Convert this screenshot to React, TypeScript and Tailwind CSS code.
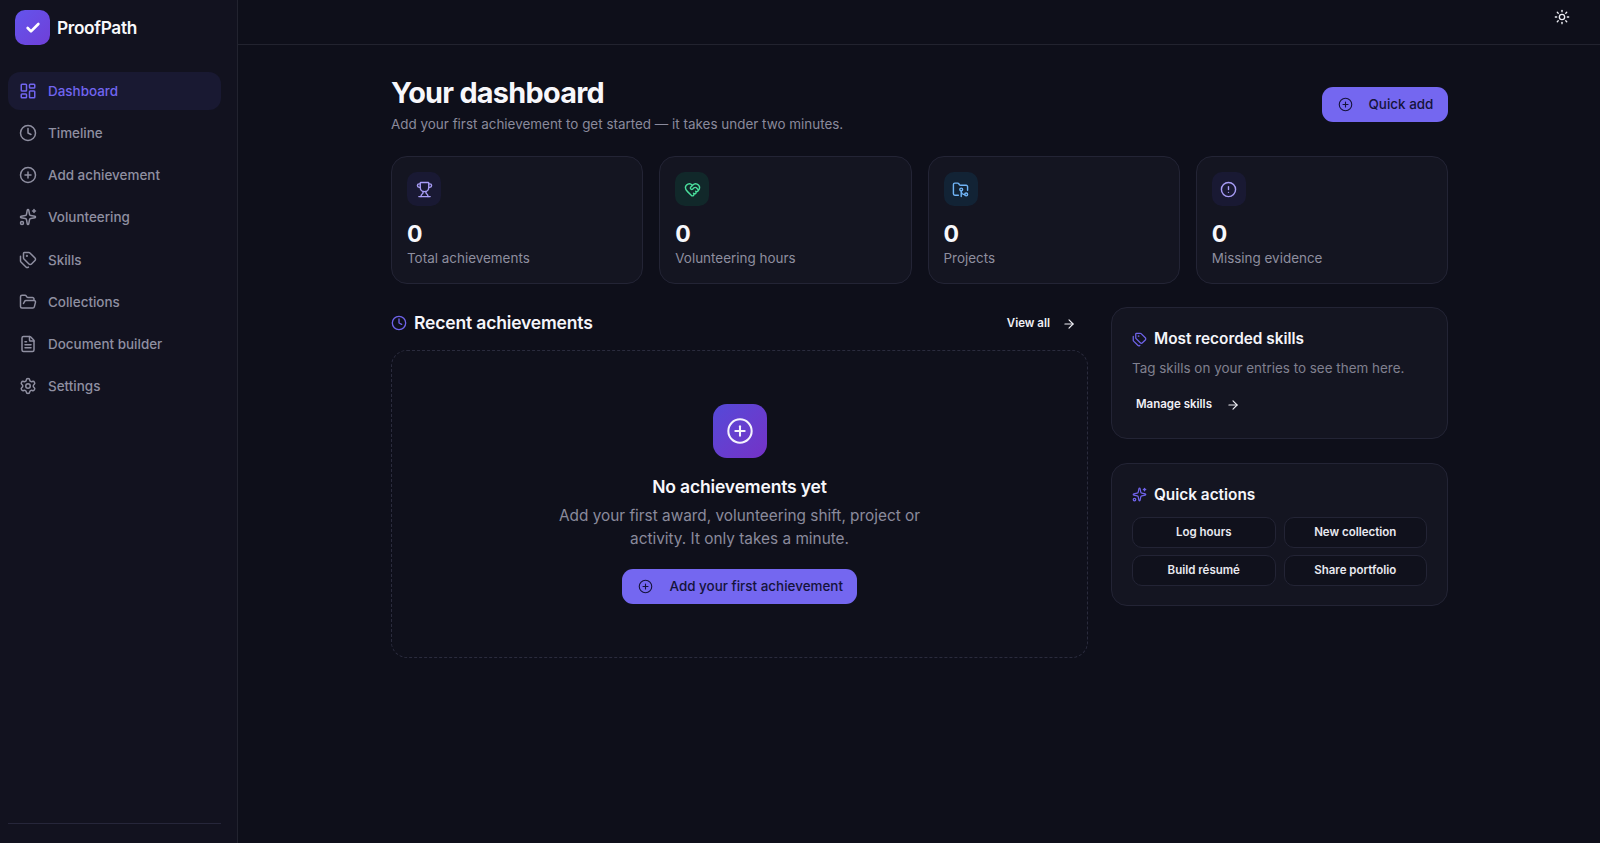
import React from "react";
import {
  LayoutDashboard, Clock, CirclePlus, Sparkles, Tags, FolderOpen, FileText, Settings,
  Trophy, HeartHandshake, FolderGit2, CircleAlert, Sun, ArrowRight, Check,
} from "lucide-react";

const nav = [
  { label: "Dashboard", Icon: LayoutDashboard, active: true },
  { label: "Timeline", Icon: Clock },
  { label: "Add achievement", Icon: CirclePlus },
  { label: "Volunteering", Icon: Sparkles },
  { label: "Skills", Icon: Tags },
  { label: "Collections", Icon: FolderOpen },
  { label: "Document builder", Icon: FileText },
  { label: "Settings", Icon: Settings },
];

function Stat({ Icon, label, box, color }: { Icon: any; label: string; box: string; color: string }) {
  return (
    <div className="h-[128px] rounded-2xl border border-[#232435] bg-[#141521] px-[15px] pt-[15px]">
      <div className={`flex h-[34px] w-[34px] items-center justify-center rounded-[10px] ${box}`}>
        <Icon size={17} strokeWidth={2} className={color} />
      </div>
      <div className="mt-[14px] text-[23px] leading-[28px] font-bold text-[#f7f7fb]">0</div>
      <div className="text-[13.44px] leading-[20px] text-[#8e8e9f]">{label}</div>
    </div>
  );
}

function Primary({ children, className }: { children: React.ReactNode; className: string }) {
  return (
    <button className={`flex h-[34.5px] items-center rounded-[11px] bg-[#7467f0] pl-[15.5px] text-[13.44px] font-medium text-[#15133a] ${className}`}>
      <CirclePlus size={15} strokeWidth={1.75} />
      {children}
    </button>
  );
}

export default function App() {
  return (
    <div className="flex h-screen overflow-hidden bg-[#0e0f1a] font-['Inter',sans-serif]">
      <aside className="flex h-full w-[238px] shrink-0 flex-col border-r border-r-[#22232f] bg-[#12121f]">
        <div className="flex h-[44px] items-center gap-[7px] pt-[11px] pl-[15px]">
          <div className="flex h-[35px] w-[35px] items-center justify-center rounded-[10px] bg-gradient-to-br from-[#6354ec] to-[#6f3fd8]">
            <Check size={16} strokeWidth={4} className="text-white" />
          </div>
          <span className="text-[17.3px] leading-none font-semibold tracking-[-0.02em] text-[#f8f8fc]">ProofPath</span>
        </div>
        <nav className="mt-[28px] flex flex-1 flex-col gap-1 pr-4 pl-2">
          {nav.map(({ label, Icon, active }) => (
            <div
              key={label}
              className={`flex h-[38.15px] items-center gap-[11px] rounded-xl pl-[11px] text-[13.44px] font-medium ${
                active ? "bg-[#191932] text-[#7165f0]" : "text-[#8f8fa1]"
              }`}
            >
              <Icon size={18} strokeWidth={2} />
              {label}
            </div>
          ))}
        </nav>
        <div className="mr-4 mb-[19px] ml-2 border-t border-t-[#26263a]" />
      </aside>

      <div className="flex min-w-0 flex-1 flex-col">
        <header className="flex h-[45px] shrink-0 items-center justify-end border-b border-b-[#22232f] pr-[30px] pb-[10px]">
          <Sun size={16} strokeWidth={2} className="text-[#eeeef4]" />
        </header>

        <main className="flex-1 pt-[30px] pr-[152px] pl-[153px]">
          <div className="flex items-start justify-between">
            <div>
              <h1 className="text-[28.8px] leading-9 font-bold tracking-[-0.025em] text-[#f7f7fb]">Your dashboard</h1>
              <p className="mt-[2.5px] text-[13.44px] leading-5 text-[#8a8a9c]">
                Add your first achievement to get started — it takes under two minutes.
              </p>
            </div>
            <Primary className="mt-[12px] w-[126px] gap-4">Quick add</Primary>
          </div>

          <div className="mt-[22.5px] grid grid-cols-4 gap-4">
            <Stat Icon={Trophy} label="Total achievements" box="bg-[#191933]" color="text-[#a79cf5]" />
            <Stat Icon={HeartHandshake} label="Volunteering hours" box="bg-[#11282a]" color="text-[#4ade9c]" />
            <Stat Icon={FolderGit2} label="Projects" box="bg-[#122335]" color="text-[#70b4f5]" />
            <Stat Icon={CircleAlert} label="Missing evidence" box="bg-[#191933]" color="text-[#a79cf5]" />
          </div>

          <div className="mt-[23px] grid grid-cols-[1fr_337px] gap-[23px]">
            <section>
              <div className="flex h-[32px] items-center justify-between pr-[12px]">
                <div className="flex items-center gap-[7px]">
                  <Clock size={16} strokeWidth={2} className="text-[#6f63ea]" />
                  <h2 className="text-[17.55px] leading-7 font-semibold tracking-[-0.01em] text-[#f5f5fa]">Recent achievements</h2>
                </div>
                <div className="flex items-center gap-[12px] pt-px text-[11.5px] font-semibold text-[#efeff5]">
                  View all
                  <ArrowRight size={14} strokeWidth={2} />
                </div>
              </div>
              <div className="mt-[11px] flex h-[308px] flex-col items-center rounded-2xl border border-dashed border-[#2a2b3d] bg-[#0f101b] pt-[53px]">
                <div className="flex h-[54px] w-[54px] items-center justify-center rounded-[14px] bg-gradient-to-br from-[#5449d8] to-[#7431c6]">
                  <CirclePlus size={28} strokeWidth={1.75} className="text-[#f4f2fd]" />
                </div>
                <h3 className="mt-[15px] text-[17.55px] leading-7 font-semibold tracking-[-0.01em] text-[#f7f7fb]">No achievements yet</h3>
                <p className="mt-[4px] w-[384px] text-center text-[15.36px] leading-[22.5px] text-[#8a8a9c]">
                  Add your first award, volunteering shift, project or activity. It only takes a minute.
                </p>
                <Primary className="mt-[19px] w-[235px] gap-[17px]">Add your first achievement</Primary>
              </div>
            </section>

            <aside className="flex flex-col gap-6">
              <div className="h-[132px] rounded-2xl border border-[#232435] bg-[#141521] px-5 pt-[19px]">
                <div className="flex items-center gap-[7px]">
                  <Tags size={15} strokeWidth={2} className="text-[#6f63ea]" />
                  <h3 className="text-[15.36px] leading-6 font-semibold text-[#f5f5fa]">Most recorded skills</h3>
                </div>
                <p className="mt-[7px] text-[13.44px] leading-5 text-[#80808f]">Tag skills on your entries to see them here.</p>
                <div className="mt-[18px] flex items-center gap-[14px] pl-1 text-[11.5px] font-semibold text-[#efeff5]">
                  Manage skills
                  <ArrowRight size={14} strokeWidth={2} />
                </div>
              </div>
              <div className="h-[143px] rounded-2xl border border-[#232435] bg-[#141521] px-5 pt-[18.5px]">
                <div className="flex items-center gap-[7px]">
                  <Sparkles size={15} strokeWidth={2} className="text-[#6f63ea]" />
                  <h3 className="text-[15.36px] leading-6 font-semibold text-[#f5f5fa]">Quick actions</h3>
                </div>
                <div className="mt-[10.5px] grid grid-cols-2 gap-x-2 gap-y-[7px]">
                  {["Log hours", "New collection", "Build résumé", "Share portfolio"].map((t) => (
                    <div
                      key={t}
                      className="flex h-[31px] items-center justify-center rounded-[10px] border border-[#232435] bg-[#10111c] text-[11.5px] font-semibold text-[#e9e9f0]"
                    >
                      {t}
                    </div>
                  ))}
                </div>
              </div>
            </aside>
          </div>
        </main>
      </div>
    </div>
  );
}
